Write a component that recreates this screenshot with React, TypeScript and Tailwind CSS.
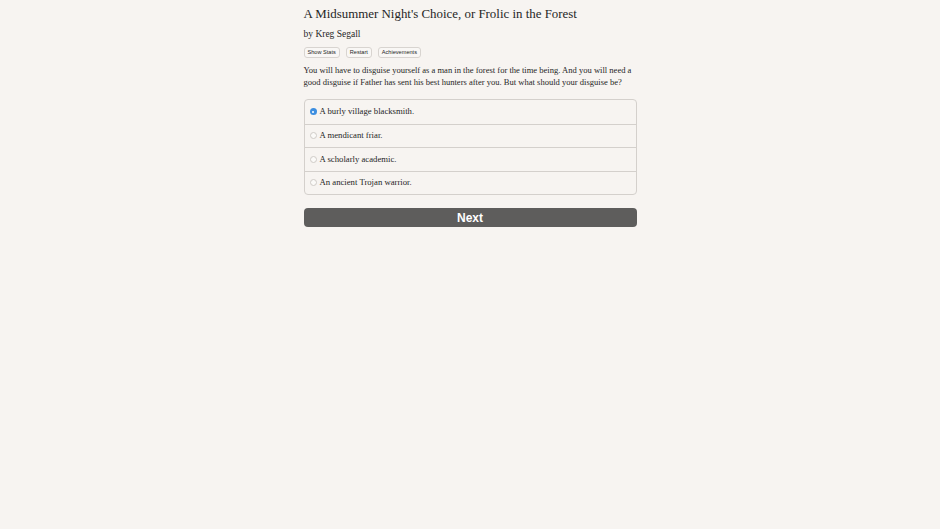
const options = [
  "A burly village blacksmith.",
  "A mendicant friar.",
  "A scholarly academic.",
  "An ancient Trojan warrior.",
]

export default function App() {
  return (
    <div className="min-h-[529px] bg-[#f7f4f1] text-[#262626] font-['Liberation_Serif',serif]">
      <div className="mx-auto w-[333px] pt-[5px]">
        <h1 className="text-[12.9px] leading-[18px]">A Midsummer Night's Choice, or Frolic in the Forest</h1>
        <h2 className="mt-[5px] text-[9.5px] leading-[12px]">by Kreg Segall</h2>
        <div className="mt-[7px] flex gap-[6px] font-['Liberation_Sans',sans-serif] text-[5.6px]">
          <button className="h-[11px] rounded-[3px] border border-[#d8d4d0] bg-[#f9f7f5] px-[3px] leading-[9px]">Show Stats</button>
          <button className="h-[11px] rounded-[3px] border border-[#d8d4d0] bg-[#f9f7f5] px-[3px] leading-[9px]">Restart</button>
          <button className="h-[11px] rounded-[3px] border border-[#d8d4d0] bg-[#f9f7f5] px-[3px] leading-[9px]">Achievements</button>
        </div>
        <p className="mt-[6px] text-[8.55px] leading-[12px]">
          You will have to disguise yourself as a man in the forest for the time being. And you will need a good disguise if Father has sent his best hunters after you. But what should your disguise be?
        </p>
        <div className="mt-[11px] rounded-[4px] border border-[#d4d0cc]">
          {options.map((o, i) => (
            <label
              key={o}
              className={`flex h-[23.5px] items-center gap-[3px] pl-[5px] text-[8.7px] ${i > 0 ? "border-t border-[#d4d0cc]" : ""}`}
            >
              {i === 0 ? (
                <span className="flex h-[7px] w-[7px] items-center justify-center rounded-full bg-[#3d8ee0]">
                  <span className="h-[2.5px] w-[2.5px] rounded-full bg-white" />
                </span>
              ) : (
                <span className="h-[7px] w-[7px] rounded-full border border-[#cfcbc7] bg-[#fbfaf8]" />
              )}
              <span>{o}</span>
            </label>
          ))}
        </div>
        <button className="mt-[13px] flex h-[19px] w-full items-center justify-center rounded-[4px] bg-[#5e5d5c] font-['Liberation_Sans',sans-serif] text-[12px] font-bold text-white">
          Next
        </button>
      </div>
    </div>
  )
}
